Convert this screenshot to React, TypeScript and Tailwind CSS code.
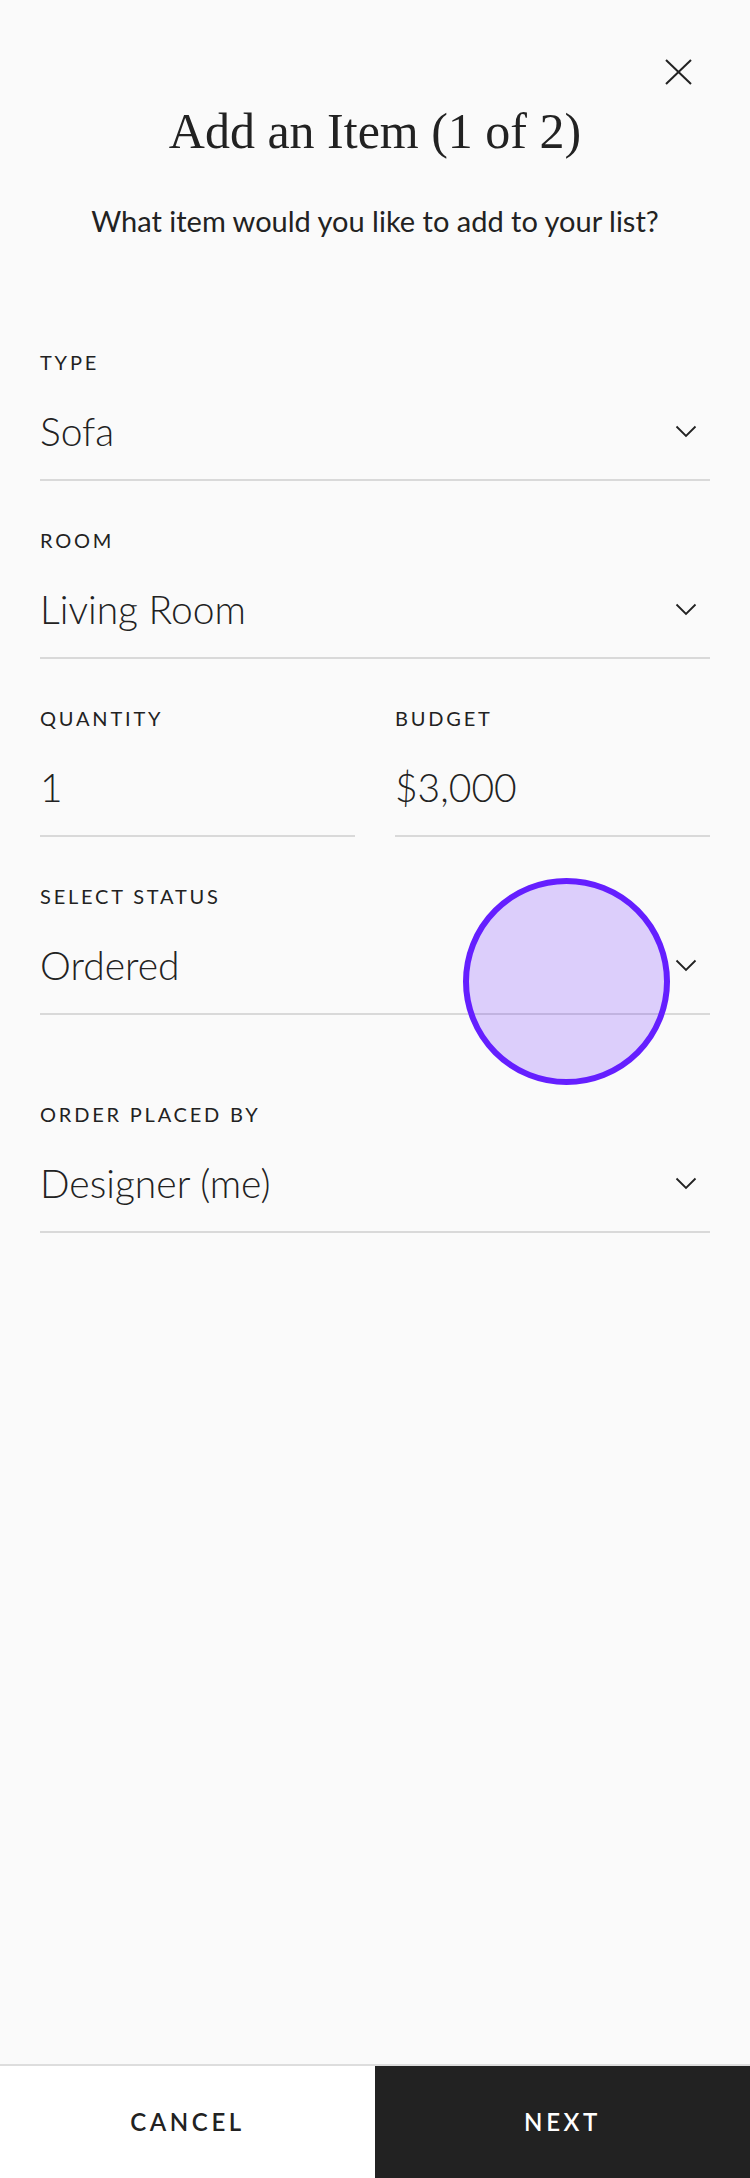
import React from "react";

const sans = "font-['Lato','Open_Sans',sans-serif]";

function Chevron() {
    return (
        <svg width="22" height="13" viewBox="0 0 22 13" fill="none" className="shrink-0">
            <polyline points="1.5,1.5 11,11 20.5,1.5" stroke="#222" strokeWidth="1.8" />
        </svg>
    );
}

function Field({ label, value, select = true, className = "" }: { label: string; value: string; select?: boolean; className?: string }) {
    return (
        <div className={"border-b-2 border-[#d9d9d9] pb-[24px] " + className}>
            <div className="text-[20px] leading-[24px] tracking-[0.14em] text-[#222]">{label}</div>
            <div className="mt-[33px] flex items-center justify-between pr-[13px]">
                <span className="text-[39px] leading-[48px] font-light text-[#222]">{value}</span>
                {select && <Chevron />}
            </div>
        </div>
    );
}

export default function App() {
    return (
        <div className={"relative min-h-screen flex flex-col bg-[#fafafa] text-[#222] " + sans}>
            <div className="flex-1">
                <div className="flex justify-end pt-[59px] pr-[58px]">
                    <svg width="27" height="26" viewBox="0 0 27 26" fill="none">
                        <line x1="1" y1="1" x2="26" y2="25" stroke="#222" strokeWidth="2" />
                        <line x1="26" y1="1" x2="1" y2="25" stroke="#222" strokeWidth="2" />
                    </svg>
                </div>
                <h1 className="mt-[18px] text-center font-['Liberation_Serif','Times_New_Roman',serif] text-[50px] leading-[56px]">
                    Add an Item (1 of 2)
                </h1>
                <p className="mt-[46px] text-center text-[29px] leading-[32px] font-normal">
                    What item would you like to add to your list?
                </p>

                <div className="px-[40px] mt-[113px] flex flex-col">
                    <Field label="TYPE" value="Sofa" />
                    <Field label="ROOM" value="Living Room" className="mt-[47px]" />
                    <div className="mt-[47px] grid grid-cols-2 gap-[40px]">
                        <Field label="QUANTITY" value="1" select={false} />
                        <Field label="BUDGET" value="$3,000" select={false} />
                    </div>
                    <Field label="SELECT STATUS" value="Ordered" className="mt-[47px]" />
                    <Field label="ORDER PLACED BY" value="Designer (me)" className="mt-[87px]" />
                </div>
            </div>

            <div className="grid grid-cols-2 h-[114px] border-t-2 border-[#dddddd]">
                <button className="bg-white text-[#222] text-[24px] font-semibold tracking-[0.15em]">CANCEL</button>
                <button className="bg-[#222] text-white text-[24px] font-semibold tracking-[0.15em]">NEXT</button>
            </div>

            {/* touch indicator */}
            <div className="absolute left-[463px] top-[878px] w-[207px] h-[207px] rounded-full border-[6px] border-[#651fff] bg-[#651fff]/20" />
        </div>
    );
}
